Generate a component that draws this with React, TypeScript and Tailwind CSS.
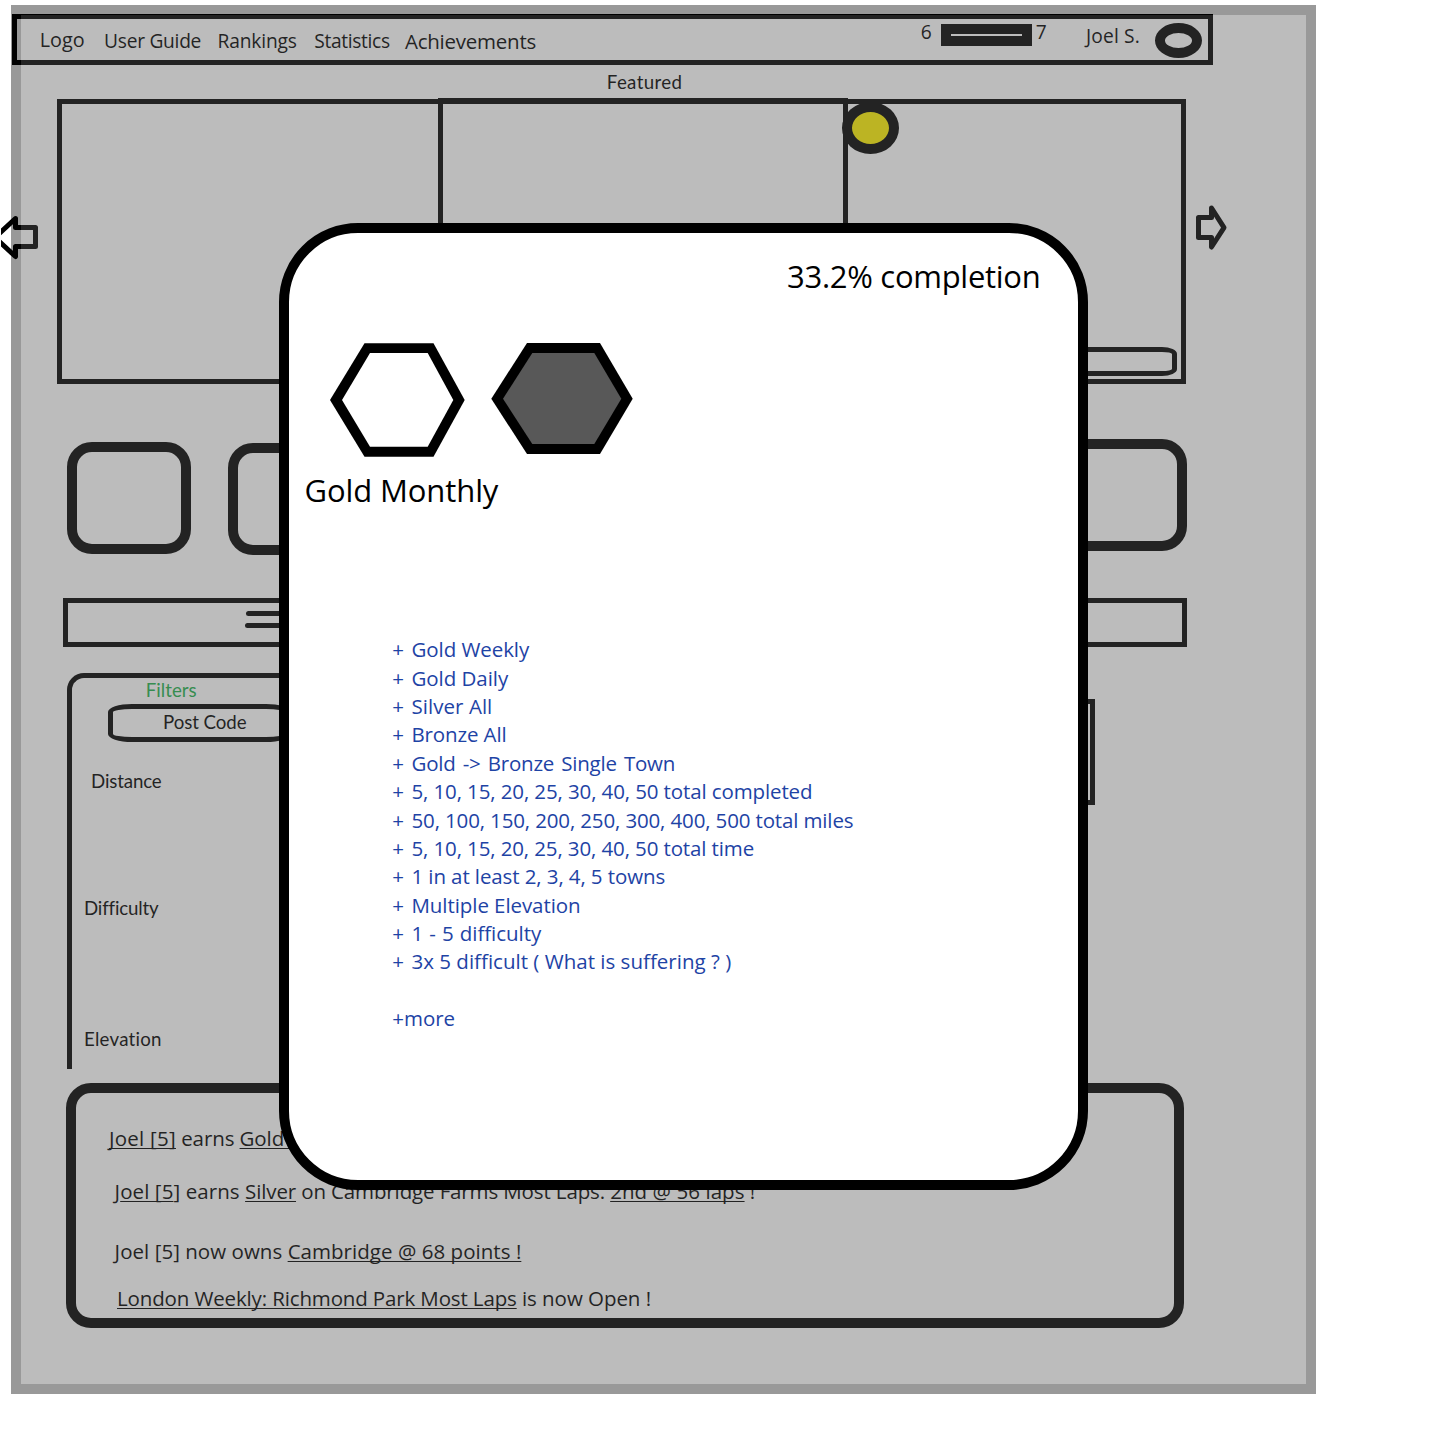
import type { ReactNode } from "react";

const achievements = [
  { text: "Gold Weekly", spacing: "tracking-[-0.07px]" },
  { text: "Gold Daily", spacing: "tracking-[-0.05px]" },
  { text: "Silver All", spacing: "tracking-[0.05px]" },
  { text: "Bronze All", spacing: "tracking-[-0.12px]" },
  { text: "Gold -> Bronze Single Town", spacing: "tracking-[-0.21px] [word-spacing:2px]" },
  { text: "5, 10, 15, 20, 25, 30, 40, 50 total completed", spacing: "tracking-[-0.115px]" },
  { text: "50, 100, 150, 200, 250, 300, 400, 500 total miles", spacing: "tracking-[-0.14px]" },
  { text: "5, 10, 15, 20, 25, 30, 40, 50 total time", spacing: "tracking-[-0.12px]" },
  { text: "1 in at least 2, 3, 4, 5 towns", spacing: "tracking-[-0.1px]" },
  { text: "Multiple Elevation", spacing: "tracking-[-0.07px]" },
  { text: "1 - 5 difficulty", spacing: "tracking-[-0.03px] [word-spacing:0.8px]" },
  { text: "3x 5 difficult ( What is suffering ? )", spacing: "tracking-[0.01px]" },
];

function Link({ children }: { children: ReactNode }) {
  return (
    <span className="underline decoration-1 underline-offset-2 [text-decoration-skip-ink:none]">
      {children}
    </span>
  );
}

function Header() {
  return (
    <header className="mt-[14px] ml-3 flex h-[51px] w-[1201px] items-start border-[5px] border-black pr-[6px] pl-[22.8px] text-[19.2px] leading-[27px]">
      <nav className="flex items-start">
        <a className="mt-[7px] w-[64.3px] text-[19.8px]">Logo</a>
        <a className="mt-2 w-[113.5px] tracking-[-0.28px]">User Guide</a>
        <a className="mt-2 w-[96.6px] tracking-[-0.18px]">Rankings</a>
        <a className="mt-2 w-[90.8px] tracking-[-0.33px]">Statistics</a>
        <a className="mt-2 text-[20.5px] leading-7 tracking-[-0.242px]">Achievements</a>
      </nav>
      <div className="ml-auto flex items-start">
        <span className="-mt-px w-[20.3px]">6</span>
        <div className="mt-[5px] h-[22px] w-[91px] border-[10px] border-black" />
        <span className="-mt-px ml-[3.8px] w-[50.2px]">7</span>
        <span className="mt-[3px] w-[69px] tracking-[0.15px]">Joel S.</span>
        <div className="mt-1 h-[35px] w-[47px] rounded-[50%] border-[10px] border-black" />
      </div>
    </header>
  );
}

function Carousel() {
  return (
    <section className="mt-1 flex h-[286px] items-start">
      <svg className="mt-[116px] ml-px h-[46px] w-[38px]" viewBox="1 214 38 46" fill="none" stroke="black" strokeWidth="5" strokeLinejoin="round">
        <path d="M35.5 227.5H15.5V218.5L-5 237.5L15.5 256.5V246.5H35.5Z" />
      </svg>
      <div className="mt-px ml-[18px] flex h-[285px] w-[1129px] border-[5px] border-black">
        <div className="w-[376px]" />
        <div className="-mt-[6px] w-[410px] border-[5px] border-b-0 border-black" />
        <div className="relative flex flex-1 items-end justify-end pr-1 pb-[3px]">
          <div className="absolute -top-[2px] -left-[6px] h-[52px] w-[57px] rounded-[50%] border-[10px] border-black bg-[#fff200]" />
          <div className="h-[29px] w-[180px] rounded-[15px/7px] border-[5px] border-black" />
        </div>
      </div>
      <svg className="mt-[105px] ml-2 h-[50px] w-9" viewBox="1194 203 36 50" fill="none" stroke="black" strokeWidth="5" strokeLinejoin="round">
        <path d="M1198.5 217.5H1211.5V208L1224 227.7L1211.5 247V237.5H1198.5Z" />
      </svg>
    </section>
  );
}

function Tiles() {
  return (
    <section className="mt-[55px] ml-[67px] flex h-[116px] w-[1120px] items-start">
      <div className="mt-[3px] h-28 w-[124px] rounded-[25px] border-[10px] border-black" />
      <div className="mt-1 ml-[37px] h-28 w-[124px] rounded-[25px] border-[10px] border-black" />
      <div className="ml-auto h-28 w-[124px] rounded-[25px] border-[10px] border-black" />
    </section>
  );
}

function Filters() {
  return (
    <aside className="ml-[67px] flex h-[396px] w-[233px] flex-col items-start rounded-tl-[17px] border-t-[5px] border-l-[5px] border-black font-[Lato,sans-serif] text-[18.7px] leading-6">
      <h2 className="ml-[73.8px] text-[#22b14c]">Filters</h2>
      <div className="mt-[2px] ml-9 h-[38px] w-[182px] rounded-[24px/8px] border-[5px] border-black pt-px pl-[50px] tracking-[-0.07px]">
        Post Code
      </div>
      <span className="mt-[27px] ml-[19px] tracking-[-0.13px]">Distance</span>
      <span className="mt-[103px] ml-3 tracking-[-0.17px]">Difficulty</span>
      <span className="mt-[107px] ml-3 tracking-[0.23px]">Elevation</span>
    </aside>
  );
}

function Feed() {
  return (
    <section className="mt-[14px] ml-[66px] h-[245px] w-[1118px] rounded-[25px] border-[10px] border-black text-[20.5px] leading-7 whitespace-nowrap">
      <p className="mt-[31px] ml-[33px] tracking-[-0.1px]">
        <span className="tracking-[0.25px]"><Link>Joel [5]</Link></span> earns <Link>Gold on</Link>
      </p>
      <p className="mt-[25px] ml-[38.6px] tracking-[-0.13px]">
        <span className="tracking-[0.08px]">J<Link>oel [5</Link>] earns </span><Link>Silver</Link> on Cambridge Farms Most Laps. <span className="tracking-[0.07px]"><Link>2nd @ 56 laps</Link></span> !
      </p>
      <p className="mt-8 ml-[38.6px] tracking-[0.04px]">
        Joel [5] now owns <Link>Cambridge @ 68 points !</Link>
      </p>
      <p className="mt-[19px] ml-[41px] tracking-[-0.14px]">
        <Link>London Weekly: Richmond Park Most Laps</Link><span className="tracking-[-0.05px]"> is now Open !</span>
      </p>
    </section>
  );
}

function AchievementsDialog() {
  return (
    <div className="absolute top-[223px] left-[279px] flex h-[967px] w-[809px] flex-col items-start rounded-[79px] border-[10px] border-black bg-white">
      <p className="mt-[22px] ml-[498px] text-[31px] leading-[42px] tracking-[-0.28px] whitespace-nowrap">33.2% completion</p>
      <div className="mt-[46px] ml-[41px] flex h-[114px] items-start gap-[26px]">
        <svg className="h-[114px] w-[135px]" viewBox="330 343 135 114">
          <path d="M330 400L364.5 343.3H433.5L464.7 400L433.5 456.7H364.5Z" fill="black" />
          <path d="M342 400L370 353H427.7L453.3 400L427.7 446.7H370Z" fill="white" />
        </svg>
        <svg className="h-[111px] w-[142px]" viewBox="491 343 142 111">
          <path d="M491.3 398.7L527 343H600L632.7 398.7L600 454H527Z" fill="black" />
          <path d="M503 398.7L532.3 353H594.3L621.3 398.7L594.3 444H532.3Z" fill="#585858" />
        </svg>
      </div>
      <h2 className="mt-3 ml-[15.5px] text-[31px] leading-[42px] tracking-[-0.1px]">Gold Monthly</h2>
      <ul className="mt-[124.4px] ml-[103.2px] text-[20.5px] leading-[28.36px] whitespace-nowrap text-[#1e43a5]">
        {achievements.map((item) => (
          <li key={item.text} className="flex">
            <span className="w-[19.3px]">+</span>
            <span className={item.spacing}>{item.text}</span>
          </li>
        ))}
        <li className="mt-[28.36px]">+more</li>
      </ul>
    </div>
  );
}

export default function App() {
  return (
    <div className="relative flex h-[1456px] w-[1440px] flex-col overflow-hidden bg-white font-['Open_Sans',sans-serif] text-black">
      <Header />
      <h1 className="mt-[5px] ml-[606.8px] font-[Lato,sans-serif] text-[18.7px] leading-6 tracking-[0.35px]">Featured</h1>
      <Carousel />
      <Tiles />
      <div className="mt-[43px] ml-[63px] flex h-[49px] w-[1124px] flex-col items-start gap-[7px] border-[5px] border-black pt-2 pl-[177px]">
        <div className="ml-px h-[5px] w-[60px] rounded-full bg-black" />
        <div className="h-[5px] w-[60px] rounded-full bg-black" />
      </div>
      <div className="mt-[26px] flex w-[1095px] items-start justify-between">
        <Filters />
        <div className="mt-[26px] h-[106px] w-20 border-[5px] border-black" />
      </div>
      <Feed />
      <div className="absolute top-[5px] left-[11px] h-[1389px] w-[1305px] border-[10px] border-black/40 bg-[#585858]/40 bg-clip-padding" />
      <AchievementsDialog />
    </div>
  );
}
